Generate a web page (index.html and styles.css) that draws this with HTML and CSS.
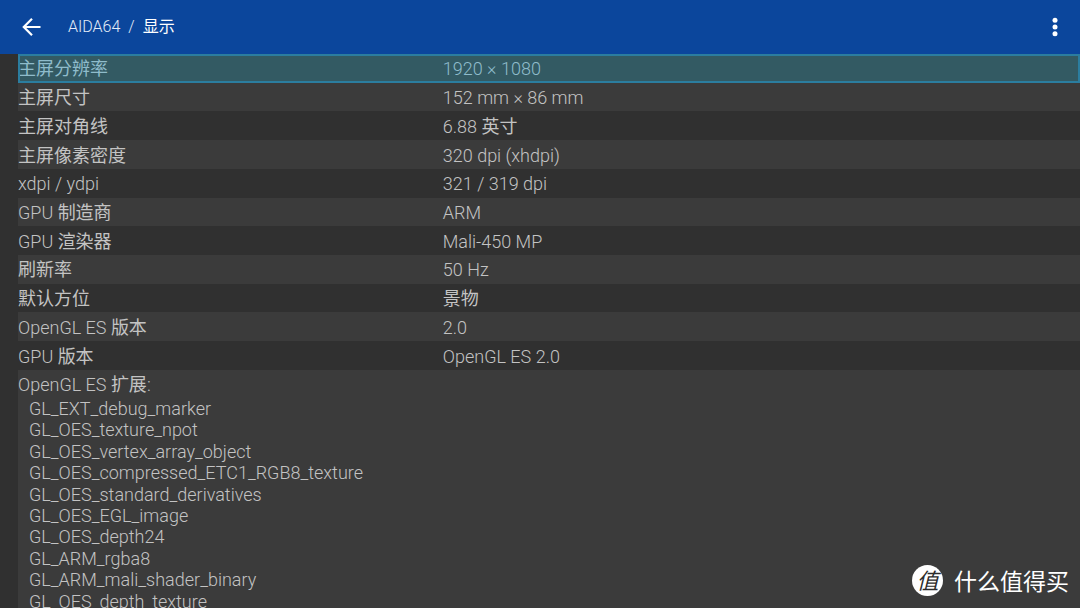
FILE: index.html
```
<!DOCTYPE html>
<html lang="zh-CN">
<head>
<meta charset="utf-8">
<meta name="viewport" content="width=device-width, initial-scale=1">
<title>AIDA64 / 显示</title>
<link rel="stylesheet" href="styles.css">
</head>
<body>
<header class="app-bar">
  <button class="icon-button back" type="button" aria-label="返回">
    <svg width="24" height="24" viewBox="0 0 24 24" fill="none" stroke="currentColor" stroke-width="2.2"><path d="M20.5 12H4M12 3.8L3.8 12l8.2 8.2"/></svg>
  </button>
  <h1 class="title"><span>AIDA64</span><span>/</span><span class="han">显示</span></h1>
  <button class="icon-button more" type="button" aria-label="更多选项">
    <svg width="24" height="24" viewBox="0 0 24 24" fill="currentColor"><circle cx="12" cy="5.3" r="2.5"/><circle cx="12" cy="12" r="2.5"/><circle cx="12" cy="18.7" r="2.5"/></svg>
  </button>
</header>
<main class="content">
  <table class="info">
    <tbody>
      <tr class="selected"><th scope="row"><span class="han">主屏分辨率</span></th><td>1920 × 1080</td></tr>
      <tr><th scope="row"><span class="han">主屏尺寸</span></th><td>152 mm × 86 mm</td></tr>
      <tr><th scope="row"><span class="han">主屏对角线</span></th><td>6.88 <span class="han">英寸</span></td></tr>
      <tr><th scope="row"><span class="han">主屏像素密度</span></th><td>320 dpi (xhdpi)</td></tr>
      <tr><th scope="row">xdpi / ydpi</th><td>321 / 319 dpi</td></tr>
      <tr><th scope="row">GPU <span class="han">制造商</span></th><td>ARM</td></tr>
      <tr><th scope="row">GPU <span class="han">渲染器</span></th><td>Mali-450 MP</td></tr>
      <tr><th scope="row"><span class="han">刷新率</span></th><td>50 Hz</td></tr>
      <tr><th scope="row"><span class="han">默认方位</span></th><td><span class="han">景物</span></td></tr>
      <tr><th scope="row">OpenGL ES <span class="han">版本</span></th><td>2.0</td></tr>
      <tr><th scope="row">GPU <span class="han">版本</span></th><td>OpenGL ES 2.0</td></tr>
    </tbody>
  </table>
  <section class="extensions">
    <h2 class="ext-title">OpenGL ES <span class="han">扩展</span>:</h2>
    <ul class="ext-list">
      <li>GL_EXT_debug_marker</li>
      <li>GL_OES_texture_npot</li>
      <li>GL_OES_vertex_array_object</li>
      <li>GL_OES_compressed_ETC1_RGB8_texture</li>
      <li>GL_OES_standard_derivatives</li>
      <li>GL_OES_EGL_image</li>
      <li>GL_OES_depth24</li>
      <li>GL_ARM_rgba8</li>
      <li>GL_ARM_mali_shader_binary</li>
      <li>GL_OES_depth_texture</li>
    </ul>
  </section>
</main>
<div class="watermark"><span class="seal">值</span><span>什么值得买</span></div>
</body>
</html>
```
FILE: styles.css
```
* { box-sizing: border-box; }

body {
  margin: 0;
  height: 100vh;
  display: flex;
  flex-direction: column;
  overflow: hidden;
  background: #303030;
  color: #c3c3c3;
  font-family: Roboto, "Noto Sans CJK SC", sans-serif;
  font-size: 18px;
  font-weight: 300;
}

.han {
  font-family: "Noto Sans CJK SC", sans-serif;
  font-weight: 400;
  line-height: 20px;
}

.app-bar {
  flex: none;
  display: flex;
  align-items: center;
  height: 54px;
  padding: 0 13px 0 20px;
  background: #0b469c;
  color: #fff;
}

.icon-button {
  display: flex;
  padding: 0;
  border: 0;
  background: none;
  color: #fff;
}

.title {
  flex: 1;
  display: flex;
  align-items: baseline;
  gap: 8px;
  margin: 0 0 0 24px;
  font-size: 16px;
  font-weight: 300;
  line-height: 24px;
  color: #e4ecf8;
}

.title .han { color: #fff; }

.content {
  flex: 1;
  min-height: 0;
  display: flex;
  flex-direction: column;
  padding-left: 18px;
  overflow: hidden;
}

.info {
  flex: none;
  width: 100%;
  height: 316px;
  border-collapse: collapse;
  table-layout: fixed;
}

.info th,
.info td {
  padding: 2px 0 0;
  font-weight: 300;
  line-height: 24px;
  text-align: left;
  vertical-align: middle;
}

.info th { width: 40%; }

.info tr:nth-child(even) { background: #3b3b3b; }

.info .selected {
  background: #335a63;
  color: #8fbccb;
  outline: 2px solid #2b7d9f;
  outline-offset: -2px;
}

.extensions {
  flex: 1 0 auto;
  background: #3b3b3b;
}

.ext-title {
  margin: 0;
  padding-top: 1px;
  font-size: 18px;
  font-weight: 300;
  line-height: 27px;
}

.ext-list {
  display: grid;
  min-height: 214px;
  margin: 0;
  padding: 0 0 0 11px;
  list-style: none;
  line-height: 21px;
}

.watermark {
  position: absolute;
  right: 11px;
  bottom: 12px;
  display: flex;
  align-items: center;
  gap: 11px;
  color: #fff;
  font-family: "Noto Sans CJK SC", sans-serif;
  font-size: 23px;
  font-weight: 400;
  line-height: 31px;
}

.seal {
  width: 31px;
  height: 31px;
  border-radius: 50%;
  background: #fff;
  color: #2c2c2c;
  font-size: 22px;
  font-style: italic;
  line-height: 29px;
  text-align: center;
}
```
